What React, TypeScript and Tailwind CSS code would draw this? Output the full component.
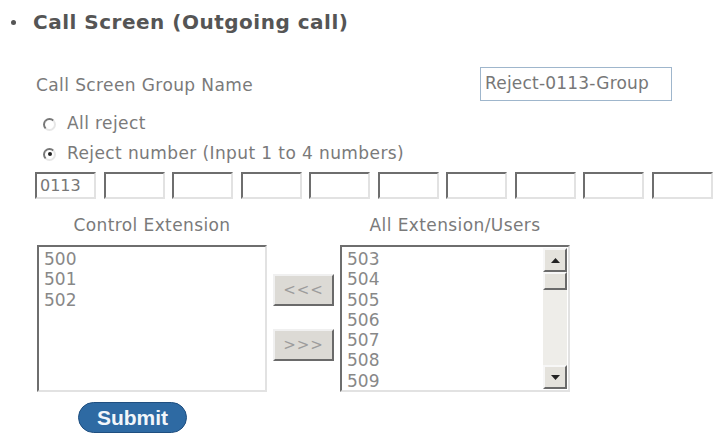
const numbers = ["0113", "", "", "", "", "", "", "", "", ""];
const controlExt = ["500", "501", "502"];
const allExt = ["503", "504", "505", "506", "507", "508", "509"];

const sunken =
  "border-2 border-t-[#6e6e6e] border-l-[#6e6e6e] border-r-[#e2e2e2] border-b-[#e2e2e2] bg-white";

const raised =
  "bg-[#e4e2dc] border-2 border-t-[#f7f7f7] border-l-[#f7f7f7] border-r-[#6a6a6a] border-b-[#6a6a6a]";

const Radio = ({ checked }: { checked?: boolean }) => (
  <span className="relative inline-block w-[13px] h-[13px] rounded-full border-2 border-t-[#777] border-l-[#777] border-r-[#e6e6e6] border-b-[#e6e6e6] bg-white">
    {checked && (
      <span className="absolute left-[2.5px] top-[2.5px] w-[4px] h-[4px] rounded-full bg-[#222]" />
    )}
  </span>
);

const ArrowButton = ({ label }: { label: string }) => (
  <button className="w-[61px] h-[32px] bg-[#dcdad5] border-2 border-t-[#f0f0f0] border-l-[#f0f0f0] border-r-[#6a6a6a] border-b-[#6a6a6a] text-[15px] text-[#9c9c9c] tracking-[1px]">
    {label}
  </button>
);

export default function App() {
  return (
    <div
      className="w-[718px] h-[434px] bg-white overflow-hidden text-[#7a7a7a] text-[17px] tracking-[0.4px]"
      style={{ fontFamily: '"DejaVu Sans", Verdana, sans-serif' }}
    >
      <div className="flex items-center pt-[4px] h-[40px]">
        <span className="ml-[11px] w-[5px] h-[5px] rounded-full bg-[#555]" />
        <h1 className="ml-[17px] text-[20px] font-bold text-[#555] tracking-[0.5px]">
          Call Screen (Outgoing call)
        </h1>
      </div>

      <div className="flex items-center justify-between mt-[27px] h-[34px] pl-[36px] pr-[46px]">
        <span className="pt-[3px]">Call Screen Group Name</span>
        <div className="w-[192px] h-[34px] border border-[#9fb6cc] flex items-center px-[4px] text-[#777] tracking-[0.2px]">
          Reject-0113-Group
        </div>
      </div>

      <div className="flex flex-col gap-[12px] mt-[14px] pl-[43px]">
        <label className="flex items-center gap-[11px] h-[18px]">
          <Radio />
          All reject
        </label>
        <label className="flex items-center gap-[11px] h-[18px]">
          <Radio checked />
          Reject number (Input 1 to 4 numbers)
        </label>
      </div>

      <div className="grid grid-cols-10 gap-x-[7.6px] w-[678px] ml-[35px] mt-[9px]">
        {numbers.map((n, i) => (
          <div
            key={i}
            className={`${sunken} h-[27px] flex items-center px-[3px] text-[16px] tracking-[0px] text-[#777]`}
          >
            {n}
          </div>
        ))}
      </div>

      <div className="flex mt-[15px] ml-[37px] h-[22px] leading-[22px]">
        <div className="w-[230px] text-center">Control Extension</div>
        <div className="w-[73px]" />
        <div className="w-[230px] text-center">All Extension/Users</div>
      </div>

      <div className="flex items-stretch mt-[9px] ml-[37px] h-[147px]">
        <div className={`${sunken} w-[230px] pl-[5px] pt-[2px] leading-[20.3px] tracking-[0px] text-[#888]`}>
          {controlExt.map((e) => (
            <div key={e}>{e}</div>
          ))}
        </div>
        <div className="flex flex-col gap-[23px] pt-[29px] px-[6px]">
          <ArrowButton label="<<<" />
          <ArrowButton label=">>>" />
        </div>
        <div className={`${sunken} w-[230px] flex`}>
          <div className="flex-1 pl-[5px] pt-[2px] leading-[20.3px] tracking-[0px] text-[#888] overflow-hidden">
            {allExt.map((e) => (
              <div key={e}>{e}</div>
            ))}
          </div>
          <div className="w-[24px] my-[1px] mr-[1px] bg-[#eeede9] flex flex-col justify-between">
            <div>
              <div className={`${raised} h-[24px] flex items-center justify-center`}>
                <svg width="9" height="5" viewBox="0 0 9 5">
                  <path d="M0 5 L4.5 0 L9 5 Z" fill="#222" />
                </svg>
              </div>
              <div className={`${raised} h-[18px]`} />
            </div>
            <div className={`${raised} h-[24px] flex items-center justify-center`}>
              <svg width="9" height="5" viewBox="0 0 9 5">
                <path d="M0 0 L9 0 L4.5 5 Z" fill="#222" />
              </svg>
            </div>
          </div>
        </div>
      </div>

      <div className="mt-[10px] ml-[78px]">
        <button
          className="w-[109px] h-[31px] rounded-full bg-[#2e6aa3] text-[#f2f6fa] text-[21px] leading-[29px] font-bold border border-[#1f4f80] tracking-[0px]"
          style={{ fontFamily: '"Liberation Sans", Arial, sans-serif' }}
        >
          Submit
        </button>
      </div>
    </div>
  );
}
